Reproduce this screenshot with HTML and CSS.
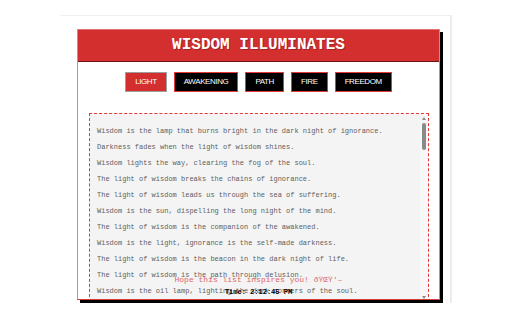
FILE: index.html
```html
<!DOCTYPE html>
<html>
<head>
<meta charset="utf-8">
<link rel="stylesheet" href="styles.css">
</head>
<body>
<div class="frame">
  <div class="card">
    <div class="header">WISDOM ILLUMINATES</div>
    <div class="tabs">
      <button class="tab active">LIGHT</button>
      <button class="tab">AWAKENING</button>
      <button class="tab">PATH</button>
      <button class="tab">FIRE</button>
      <button class="tab">FREEDOM</button>
    </div>
    <div class="box">
      <div class="lines">
        <p>Wisdom is the lamp that burns bright in the dark night of ignorance.</p>
        <p>Darkness fades when the light of wisdom shines.</p>
        <p>Wisdom lights the way, clearing the fog of the soul.</p>
        <p>The light of wisdom breaks the chains of ignorance.</p>
        <p>The light of wisdom leads us through the sea of suffering.</p>
        <p>Wisdom is the sun, dispelling the long night of the mind.</p>
        <p>The light of wisdom is the companion of the awakened.</p>
        <p>Wisdom is the light, ignorance is the self-made darkness.</p>
        <p>The light of wisdom is the beacon in the dark night of life.</p>
        <p>The light of wisdom is the path through delusion.</p>
        <p>Wisdom is the oil lamp, lighting the dark corners of the soul.</p>
      </div>
      <div class="scrollbar">
        <div class="arrow up"></div>
        <div class="track"><div class="thumb"></div></div>
        <div class="arrow down"></div>
      </div>
    </div>
    <div class="footer">
      <p class="hope">Hope this list inspires you! ðŸŒŸ'–</p>
      <p class="time">Time: 2:12:45 PM</p>
    </div>
  </div>
</div>
</body>
</html>
```
FILE: styles.css
```css
* { box-sizing: border-box; }
html, body { margin: 0; padding: 0; background: #fff; }
body { font-family: "Liberation Mono", monospace; }

.frame {
  width: 392px;
  height: 288px;
  margin: 15px 0 0 60px;
  padding: 13px 0 0 17px;
  border-top: 1px solid #f0f0f0;
  border-right: 2px solid #ececec;
}

.card {
  position: relative;
  width: 363px;
  height: 271px;
  background: #fff;
  border: 1px solid #e88080;
  border-top: none;
  border-bottom: 1px solid #d83a3a;
  box-shadow: 3px 3px 0 #000;
  overflow: hidden;
}

.header {
  height: 33px;
  background: #d32f2f;
  border-top: 1px solid #e57373;
  border-bottom: 1px solid #6b1414;
  color: #fff;
  font-family: "Liberation Mono", monospace;
  font-weight: bold;
  font-size: 16px;
  line-height: 31px;
  text-align: center;
  text-shadow: 1px 1px 0 rgba(0,0,0,0.25);
  margin: 0 -1px;
}

.tabs {
  display: flex;
  justify-content: center;
  gap: 7px;
  margin-top: 10px;
}

.tab {
  height: 20px;
  padding: 0 9px;
  margin: 0;
  background: #000;
  color: #fff;
  border: 1px solid #e53935;
  font-family: "Liberation Sans", Arial, sans-serif;
  font-size: 8px;
  letter-spacing: -0.4px;
  line-height: 18px;
}

.tab.active {
  background: #d32f2f;
  border-color: #9e9e9e;
}

.box {
  display: flex;
  height: 189px;
  margin: 21px 10px 0 11px;
  background: #f4f4f4;
  border: 1px dashed #e53935;
}

.lines {
  flex: 1;
  padding: 5px 7px;
  overflow: hidden;
}

.lines p {
  margin: 8px 0;
  font-size: 7px;
  line-height: 8px;
  color: #5f5f5f;
  white-space: nowrap;
}

.scrollbar {
  width: 8px;
  display: flex;
  flex-direction: column;
  background: #f8f8f8;
}

.arrow {
  height: 8px;
  display: flex;
  align-items: center;
  justify-content: center;
}

.arrow::before {
  content: "";
  width: 0;
  height: 0;
  border-left: 2.5px solid transparent;
  border-right: 2.5px solid transparent;
}

.arrow.up::before { border-bottom: 3px solid #8a8a8a; }
.arrow.down::before { border-top: 3px solid #8a8a8a; }

.track {
  flex: 1;
  padding: 1px 2px 0;
}

.thumb {
  height: 27px;
  background: #8a8a8a;
  border-radius: 2px;
}

.footer {
  position: absolute;
  left: 0;
  right: 0;
  bottom: 3px;
  text-align: center;
}

.footer p { margin: 0; line-height: 8px; }

.hope {
  font-size: 8px;
  color: #e06666;
  margin-bottom: 4px !important;
}

.time {
  font-size: 7px;
  font-weight: bold;
  color: #000;
}
```
